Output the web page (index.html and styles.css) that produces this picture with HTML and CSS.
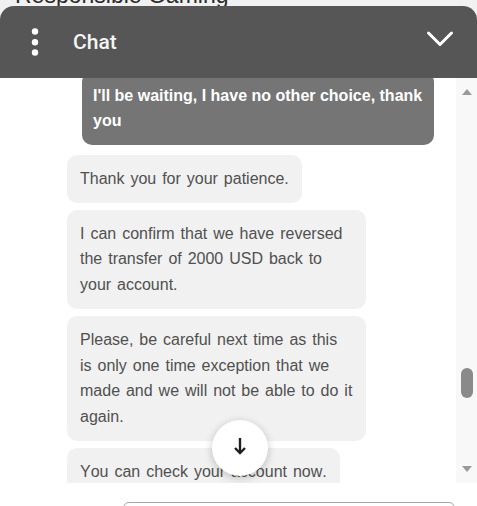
FILE: index.html
```html
<!DOCTYPE html>
<html>
<head>
  <title>Chat</title>
  <link rel="stylesheet" href="styles.css">
</head>
<body>
  <div class="page-title"><span>Responsible Gaming</span></div>

  <div class="chat">
    <div class="chat-header">
      <svg class="menu-icon" width="8" height="28" viewBox="0 0 8 28">
        <circle cx="4" cy="3.5" r="3.2" fill="#fff"/>
        <circle cx="4" cy="14.3" r="3.2" fill="#fff"/>
        <circle cx="4" cy="24.5" r="3.2" fill="#fff"/>
      </svg>
      <span class="chat-title">Chat</span>
      <svg class="collapse-icon" width="28" height="18" viewBox="0 0 28 18">
        <polyline points="2.5,3 14,14.5 25.5,3" fill="none" stroke="#fff" stroke-width="3" stroke-linecap="round" stroke-linejoin="round"/>
      </svg>
    </div>

    <div class="chat-body">
      <div class="messages">
        <div class="message-list">
          <div class="bubble bubble-user">I'll be waiting, I have no other choice, thank you</div>
          <div class="bubble bubble-agent">Thank you for your patience.</div>
          <div class="bubble bubble-agent">I can confirm that we have reversed the transfer of 2000 USD back to your account.</div>
          <div class="bubble bubble-agent">Please, be careful next time as this is only one time exception that we made and we will not be able to do it again.</div>
          <div class="bubble bubble-agent">You can check your account now.</div>
        </div>
        <button class="scroll-bottom" title="Scroll to bottom">
          <svg width="22" height="22" viewBox="0 0 22 22">
            <line x1="11" y1="3" x2="11" y2="18" stroke="#1f1f1f" stroke-width="2.4"/>
            <polyline points="6,13 11,18 16,13" fill="none" stroke="#1f1f1f" stroke-width="2.4"/>
          </svg>
        </button>
      </div>
      <div class="scrollbar">
        <span class="scroll-arrow-up"></span>
        <span class="scroll-thumb"></span>
        <span class="scroll-arrow-down"></span>
      </div>
    </div>

    <div class="composer">
      <div class="composer-input"></div>
    </div>
  </div>
</body>
</html>
```

FILE: styles.css
```css
body {
  margin: 0;
  height: 506px;
  overflow: hidden;
  background-color: #f1f1f1;
  font-family: "Liberation Sans", Arial, sans-serif;
}
.page-title {
  height: 6px;
  overflow: hidden;
  padding-left: 15px;
  font-size: 23px;
  line-height: 23px;
  color: #2b2b2b;
}
.page-title span { display: block; margin-top: -16px; }

.chat-header {
  height: 72px;
  background-color: #565656;
  border-radius: 14px 14px 0 0;
  display: flex;
  align-items: center;
  padding: 0 23px 0 31px;
}
.chat-title {
  margin-left: 34px;
  font-family: Roboto, sans-serif;
  font-size: 21px;
  font-weight: 500;
  color: #f4f4f4;
}
.collapse-icon { margin-left: auto; margin-bottom: 6px; }

.chat-body {
  display: flex;
  height: 405px;
  background-color: #fff;
}
.messages {
  flex: 1;
  position: relative;
  overflow: hidden;
}
.message-list {
  display: flex;
  flex-direction: column;
  align-items: flex-start;
  gap: 7px;
  margin-top: -6.4px;
  padding: 0 22px 0 67px;
}
.bubble {
  box-sizing: border-box;
  padding: 11px 13px;
  border-radius: 10px;
  font-size: 16px;
  line-height: 25.7px;
  font-kerning: none;
}
.bubble-user {
  align-self: flex-end;
  max-width: 352px;
  padding: 11px 11px;
  margin-bottom: 3px;
  background-color: #757575;
  color: #fff;
  font-weight: bold;
}
.bubble-agent {
  max-width: 299.4px;
  background-color: #f1f1f1;
  color: #505050;
  word-spacing: 1.5px;
}

.scroll-bottom {
  position: absolute;
  left: 212px;
  bottom: 7px;
  width: 56px;
  height: 56px;
  border: none;
  border-radius: 50%;
  background-color: #fff;
  box-shadow: 0 2px 8px rgba(0,0,0,0.22);
  display: flex;
  align-items: center;
  justify-content: center;
  padding: 0 0 4px;
}

.scrollbar {
  width: 21px;
  background-color: #f8f8f8;
  display: flex;
  flex-direction: column;
  align-items: center;
  padding: 11px 0;
  box-sizing: border-box;
}
.scroll-arrow-up, .scroll-arrow-down {
  width: 0; height: 0;
  border-left: 5.5px solid transparent;
  border-right: 5.5px solid transparent;
}
.scroll-arrow-up { border-bottom: 6px solid #9a9a9a; }
.scroll-arrow-down { border-top: 6px solid #9a9a9a; margin-top: auto; }
.scroll-thumb {
  width: 12px;
  height: 30px;
  margin-top: 273px;
  border-radius: 6px;
  background-color: #8a8a8a;
}

.composer {
  height: 23px;
  overflow: hidden;
  background-color: #fff;
  padding: 19px 22px 0 123px;
  box-sizing: border-box;
}
.composer-input {
  height: 40px;
  border: 1px solid #a6a6a6;
  border-radius: 6px;
}
```
